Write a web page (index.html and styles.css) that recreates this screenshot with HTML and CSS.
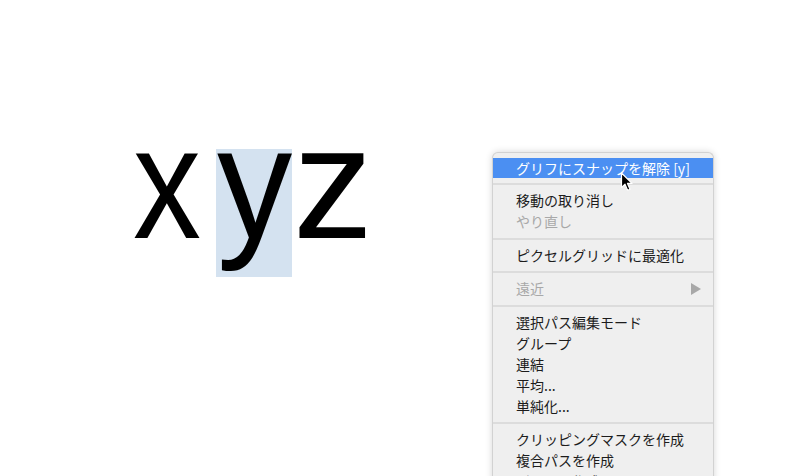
FILE: index.html
```html
<!DOCTYPE html>
<html lang="ja">
<head>
<meta charset="utf-8">
<link rel="stylesheet" href="styles.css">
</head>
<body>
<div class="screen">
  <div class="stage">
    <div class="word">
      <span class="glyph gx"><span class="ch">x</span></span>
      <span class="glyph gy sel"><span class="ch">y</span></span>
      <span class="glyph gz"><span class="ch">z</span></span>
    </div>
  </div>
  <div class="menu">
    <div class="item active">グリフにスナップを解除 [y]</div>
    <div class="sep"></div>
    <div class="item">移動の取り消し</div>
    <div class="item disabled">やり直し</div>
    <div class="sep tall"></div>
    <div class="item">ピクセルグリッドに最適化</div>
    <div class="sep"></div>
    <div class="item disabled"><span>遠近</span><svg class="sub" width="10" height="12" viewBox="0 0 10 12"><polygon points="0,0 10,6 0,12" fill="#a8a8a8"/></svg></div>
    <div class="sep tall"></div>
    <div class="item">選択パス編集モード</div>
    <div class="item">グループ</div>
    <div class="item">連結</div>
    <div class="item">平均...</div>
    <div class="item">単純化...</div>
    <div class="sep"></div>
    <div class="item">クリッピングマスクを作成</div>
    <div class="item">複合パスを作成</div>
    <div class="item">ガイドを作成</div>
  </div>
  <svg class="cursor" width="14" height="20" viewBox="0 0 14 20">
    <path d="M1.5,1 L1.5,15.5 L5,12.2 L7.6,18.3 L10,17.3 L7.5,11.4 L12,11.4 Z" fill="#000" stroke="#fff" stroke-width="1.2" stroke-linejoin="round"/>
  </svg>
</div>
</body>
</html>
```

FILE: styles.css
```css
html, body {
  margin: 0;
  padding: 0;
  background: #ffffff;
}

.screen {
  position: relative;
  width: 800px;
  height: 476px;
  overflow: hidden;
  display: flex;
  align-items: flex-start;
  background: #ffffff;
}

.stage {
  width: 492px;
  flex: none;
  padding-top: 149px;
  padding-left: 133px;
  box-sizing: border-box;
}

.word {
  display: flex;
  align-items: flex-start;
  font-family: "Liberation Sans", Arial, sans-serif;
  font-size: 160px;
  line-height: 67px;
  color: #000;
}

.glyph {
  display: block;
  flex: none;
  height: 67px;
  white-space: nowrap;
}

.ch {
  display: inline-block;
  transform-origin: 0 0;
}

.gx {
  width: 83px;
}

.gx .ch {
  transform: scaleX(0.85);
}

.gy {
  width: 76px;
  height: 128px;
  margin-right: 1px;
  background: #d4e2f0;
}

.gy .ch {
  transform: translateX(1px) scaleX(0.94);
}

.gz {
  width: 80px;
}

.gz .ch {
  transform: scaleX(1);
}

.menu {
  flex: none;
  width: 222px;
  margin-top: 152px;
  box-sizing: border-box;
  padding-top: 5px;
  background: #efefef;
  border: 1px solid #d2d2d2;
  border-bottom: none;
  border-radius: 6px 6px 0 0;
  box-shadow: 0 0 7px rgba(0, 0, 0, 0.16);
  font-family: "Noto Sans CJK JP", "Noto Sans", sans-serif;
  font-size: 14px;
  color: #1c1c1c;
}

.item {
  display: flex;
  align-items: center;
  height: 21px;
  padding-left: 23px;
  padding-right: 12px;
  white-space: nowrap;
  line-height: 21px;
}

.item.active {
  background: #4b8ff2;
  color: #ffffff;
  height: 20px;
}

.item.disabled {
  color: #a8a8a8;
}

.sub {
  margin-left: auto;
}

.sep {
  height: 12px;
  display: flex;
  align-items: center;
}

.sep.tall {
  height: 13px;
}

.sep::before {
  content: "";
  display: block;
  width: 100%;
  height: 2px;
  background: #dcdcdc;
}

.cursor {
  position: absolute;
  left: 620px;
  top: 172px;
}
```
